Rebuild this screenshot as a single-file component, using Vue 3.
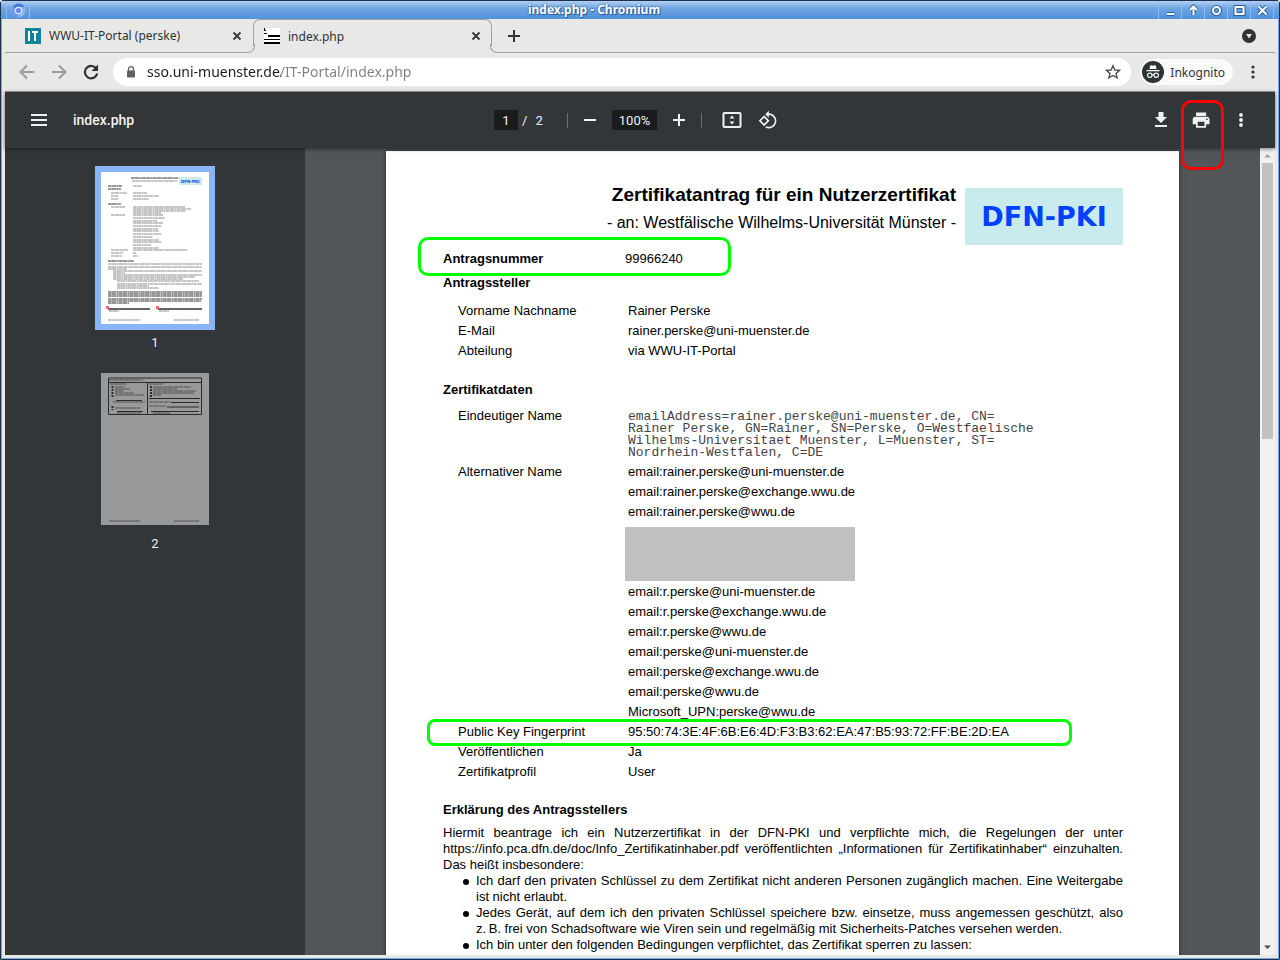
<template>
  <div class="window">
    <header class="titlebar">
      <span class="app-icon">
        <svg width="15" height="15" viewBox="0 0 15 15">
          <circle cx="7.5" cy="7.5" r="7" fill="#8db4f2"/>
          <path d="M7.500 7.500L1.500 4A7 7 0 0 1 13.600 4H7.500Z" fill="#4a78d8"/>
          <path d="M1.500 4A7 7 0 0 0 6.500 14.400L9.500 9Z" fill="#6e9af0"/>
          <circle cx="7.500" cy="7.500" r="3.200" fill="#6490ea" stroke="#dce9fd" stroke-width="1.200"/>
        </svg>
      </span>
      <span class="window-title">index.php - Chromium</span>
      <div class="window-buttons">
        <button v-for="b in windowButtons" :key="b.label" :aria-label="b.label">
          <svg width="13" height="13" viewBox="0 0 13 13" fill="none" stroke="#2d5f9f" stroke-width="4">
            <path :d="b.d"/>
            <path :d="b.d" stroke="#fff" stroke-width="2"/>
          </svg>
        </button>
      </div>
    </header>

    <div class="tabstrip">
      <div class="tab">
        <svg width="16" height="16" viewBox="0 0 16 16">
          <rect width="16" height="16" fill="#0f839c"/>
          <path d="M3 3H5V13H3ZM7 3H13V5H11V13H9V5H7Z" fill="#fff"/>
        </svg>
        <span class="tab-title">WWU-IT-Portal (perske)</span>
        <button class="icon-btn" aria-label="Tab schließen">
          <svg width="10" height="10" viewBox="0 0 10 10"><path d="M1.500 1.500L8.500 8.500M8.500 1.500L1.500 8.500" stroke="#333739" stroke-width="1.800"/></svg>
        </button>
      </div>
      <div class="tab active">
        <svg width="16" height="16" viewBox="0 0 16 16">
          <rect width="16" height="16" fill="#fff"/>
          <path d="M0 0H1V2H2V3H0ZM0 5H3V6H0ZM4 7H16V9H4ZM0 11H16V12H0ZM0 14H16V16H0Z" fill="#000"/>
        </svg>
        <span class="tab-title">index.php</span>
        <button class="icon-btn" aria-label="Tab schließen">
          <svg width="10" height="10" viewBox="0 0 10 10"><path d="M1.500 1.500L8.500 8.500M8.500 1.500L1.500 8.500" stroke="#333739" stroke-width="1.800"/></svg>
        </button>
      </div>
      <div class="strip-rest">
        <button class="icon-btn" aria-label="Neuer Tab">
          <svg width="12" height="12" viewBox="0 0 12 12"><path d="M6 0V12M0 6H12" stroke="#2e3436" stroke-width="2"/></svg>
        </button>
        <button class="icon-btn" aria-label="Tabs suchen">
          <svg width="14" height="14" viewBox="0 0 14 14">
            <circle cx="7" cy="7" r="7" fill="#2e3436"/>
            <path d="M4 5H10L7 9.500Z" fill="#e8e8e6"/>
          </svg>
        </button>
      </div>
    </div>

    <nav class="navbar">
      <button class="icon-btn nav-btn" aria-label="Zurück">
        <svg width="16" height="16" viewBox="0 0 16 16" fill="none" stroke="#9a9d9d" stroke-width="2"><path d="M15 8H2M8 1.500L1.500 8L8 14.500"/></svg>
      </button>
      <button class="icon-btn nav-btn" aria-label="Vorwärts">
        <svg width="16" height="16" viewBox="0 0 16 16" fill="none" stroke="#9a9d9d" stroke-width="2"><path d="M1 8H14M8 1.500L14.500 8L8 14.500"/></svg>
      </button>
      <button class="icon-btn nav-btn" aria-label="Neu laden">
        <svg width="16" height="16" viewBox="0 0 16 16" fill="none"><path d="M13.500 5A6.200 6.200 0 1 0 14.200 9.500" stroke="#2e3436" stroke-width="2.200"/><path d="M15 0.500V7H8.500Z" fill="#2e3436"/></svg>
      </button>
      <div class="omnibox">
        <svg width="10" height="12" viewBox="0 0 10 12"><rect x="1" y="4.500" width="8" height="7" rx="1" fill="#5f6368"/><path d="M2.500 5V3.200A2.500 2.500 0 0 1 7.500 3.200V5" fill="none" stroke="#5f6368" stroke-width="1.300"/></svg>
        <input v-model="url" class="url" aria-label="Adresse">
        <button class="icon-btn" aria-label="Lesezeichen">
          <svg width="16" height="16" viewBox="0 0 16 16"><path d="M8 1.800L9.900 6L14.500 6.400L11 9.400L12.100 13.900L8 11.500L3.900 13.900L5 9.400L1.500 6.400L6.100 6Z" fill="none" stroke="#4c5052" stroke-width="1.400"/></svg>
        </button>
      </div>
      <button class="profile">
        <svg width="22" height="22" viewBox="0 0 22 22">
          <circle cx="11" cy="11" r="11" fill="#2e3436"/>
          <path d="M7.500 8L8.300 4.500Q8.500 4 9.300 4.300Q11 5 12.700 4.300Q13.500 4 13.700 4.500L14.500 8ZM4.500 9H17.500V10.200H4.500Z" fill="#fff"/>
          <g fill="none" stroke="#fff" stroke-width="1.100"><circle cx="7.800" cy="14.200" r="2.200"/><circle cx="14.200" cy="14.200" r="2.200"/><path d="M10 14Q11 13.200 12 14"/></g>
        </svg>
        Inkognito
      </button>
      <button class="icon-btn browser-menu" aria-label="Menü">
        <svg width="4" height="14" viewBox="0 0 4 14" fill="#2e3436"><circle cx="2" cy="2" r="1.600"/><circle cx="2" cy="7" r="1.600"/><circle cx="2" cy="12" r="1.600"/></svg>
      </button>
    </nav>

    <div class="pdf">
      <div class="pdf-toolbar">
        <div class="pdf-start">
          <button class="pdf-btn" aria-label="Seitenleiste">
            <svg width="24" height="24" viewBox="0 0 24 24"><path d="M4 6H20V8H4ZM4 11H20V13H4ZM4 16H20V18H4Z"/></svg>
          </button>
          <span class="pdf-name">index.php</span>
        </div>
        <div class="pdf-center">
          <div class="pages">
            <input v-model="page" class="page-input" aria-label="Seite"><span>/</span><span>2</span>
          </div>
          <span class="sep"></span>
          <button class="pdf-btn" aria-label="Verkleinern"><svg width="24" height="24" viewBox="0 0 24 24"><path d="M6 11H18V13H6Z"/></svg></button>
          <input v-model="zoom" class="zoom-input" aria-label="Zoom">
          <button class="pdf-btn" aria-label="Vergrößern"><svg width="24" height="24" viewBox="0 0 24 24"><path d="M6 11H11V6H13V11H18V13H13V18H11V13H6Z"/></svg></button>
          <span class="sep"></span>
          <button class="pdf-btn fit" aria-label="An Seite anpassen">
            <svg width="24" height="24" viewBox="0 0 24 24"><rect x="3.500" y="5" width="17" height="14" rx="1" fill="none" stroke="#f1f1f1" stroke-width="2"/><path d="M12 7.500L14.500 10.500H9.500ZM12 16.500L9.500 13.500H14.500Z"/></svg>
          </button>
          <button class="pdf-btn rotate" aria-label="Drehen">
            <svg width="24" height="24" viewBox="0 0 24 24"><path d="M7.340 6.410L0.860 12.900L7.350 19.380L13.840 12.900ZM3.690 12.900L7.350 9.240L11 12.900L7.340 16.560ZM19.360 6.640C17.610 4.880 15.300 4 13 4V0.760L8.760 5L13 9.240V6C14.790 6 16.580 6.680 17.950 8.050A7 7 0 0 1 10.110 19.400L8.620 20.890A9 9 0 0 0 19.360 6.640Z"/></svg>
          </button>
        </div>
        <div class="pdf-end">
          <button class="pdf-btn" aria-label="Herunterladen"><svg width="24" height="24" viewBox="0 0 24 24"><path d="M18 9H14.500V4H9.500V9H6L12 15ZM6 17V19H18V17Z"/></svg></button>
          <button class="pdf-btn print" aria-label="Drucken"><svg width="24" height="24" viewBox="0 0 24 24"><path d="M19 8H5C3.340 8 2 9.340 2 11V17H6V21H18V17H22V11C22 9.340 20.660 8 19 8ZM16 19H8V14H16ZM19 12A1 1 0 1 1 19 10A1 1 0 0 1 19 12ZM18 3H6V7H18Z" transform="translate(2 2) scale(.84)"/></svg></button>
          <button class="pdf-btn" aria-label="Weitere Aktionen"><svg width="24" height="24" viewBox="0 0 24 24"><circle cx="12" cy="7" r="1.900"/><circle cx="12" cy="12" r="1.900"/><circle cx="12" cy="17" r="1.900"/></svg></button>
        </div>
      </div>

      <div class="pdf-body">
        <aside class="thumbs">
          <button class="thumb selected">
            <svg width="108" height="152" viewBox="0 0 108 152" class="thumb-page">
              <rect width="108" height="152" fill="#fff"/>
              <rect x="78" y="5" width="23" height="8" fill="#c9ebed"/>
              <text x="80" y="11" class="mini-logo">DFN-PKI</text>
              <path v-for="(l, i) in thumbLines" :key="i" :d="`M${l[0]} ${l[1]}H${l[2]}`" :class="['line', { bold: l[3] }]"/>
              <path d="M7 137H49M57 137H101" stroke="#333" stroke-width="1.500"/>
              <path d="M5 134H8V137H5ZM55 134H58V137H55Z" fill="#f66"/>
            </svg>
            <span>1</span>
          </button>
          <button class="thumb">
            <svg width="108" height="152" viewBox="0 0 108 152" class="thumb-page">
              <rect width="108" height="152" fill="#98999b"/>
              <g fill="none" stroke="#2a2b2d">
                <path d="M7.500 5H100.500V41.500H7.500ZM7.500 9.500H100.500M46.500 9.500V41.500"/>
                <path d="M15 27.500H41M48 25.500H99M70 29.500H98M66 34H98M16 38.500H42M50 38.500H98"/>
                <path d="M11.500 13V24M50 13V24M11.500 33V37" stroke-width="2" stroke-dasharray="2 1"/>
              </g>
              <path v-for="(l, i) in backLines" :key="i" :d="`M${l[0]} ${l[1]}H${l[2]}`" class="line back"/>
            </svg>
            <span>2</span>
          </button>
        </aside>

        <main class="viewer">
          <article class="sheet">
            <div class="doc-head">
              <div>
                <h1>Zertifikatantrag für ein Nutzerzertifikat</h1>
                <p class="subtitle">- an: Westfälische Wilhelms-Universität Münster -</p>
              </div>
              <div class="logo">DFN-PKI</div>
            </div>

            <div class="number marked">
              <strong>Antragsnummer</strong><span>99966240</span>
            </div>
            <h2 class="applicant">Antragssteller</h2>
            <dl>
              <div v-for="r in applicant" :key="r[0]" class="row"><dt>{{ r[0] }}</dt><dd>{{ r[1] }}</dd></div>
            </dl>

            <h2 class="cert">Zertifikatdaten</h2>
            <dl>
              <div class="row dn">
                <dt>Eindeutiger Name</dt>
                <dd><span v-for="l in dn" :key="l">{{ l }}</span></dd>
              </div>
              <div class="row">
                <dt>Alternativer Name</dt>
                <dd>
                  <div v-for="n in longNames" :key="n">{{ n }}</div>
                  <div class="redacted"></div>
                  <div v-for="n in shortNames" :key="n">{{ n }}</div>
                </dd>
              </div>
              <div class="row marked fingerprint">
                <dt>Public Key Fingerprint</dt>
                <dd>95:50:74:3E:4F:6B:E6:4D:F3:B3:62:EA:47:B5:93:72:FF:BE:2D:EA</dd>
              </div>
              <div class="row"><dt>Veröffentlichen</dt><dd>Ja</dd></div>
              <div class="row"><dt>Zertifikatprofil</dt><dd>User</dd></div>
            </dl>

            <h2 class="declaration">Erklärung des Antragsstellers</h2>
            <p class="lines">
              <span class="full">Hiermit beantrage ich ein Nutzerzertifikat in der DFN-PKI und verpflichte mich, die Regelungen der unter</span>
              <span class="full">https://info.pca.dfn.de/doc/Info_Zertifikatinhaber.pdf veröffentlichten „Informationen für Zertifikatinhaber“ einzuhalten.</span>
              <span>Das heißt insbesondere:</span>
            </p>
            <ul class="lines">
              <li>
                <span class="full">Ich darf den privaten Schlüssel zu dem Zertifikat nicht anderen Personen zugänglich machen. Eine Weitergabe</span>
                <span>ist nicht erlaubt.</span>
              </li>
              <li>
                <span class="full">Jedes Gerät, auf dem ich den privaten Schlüssel speichere bzw. einsetze, muss angemessen geschützt, also</span>
                <span>z.&#8239;B. frei von Schadsoftware wie Viren sein und regelmäßig mit Sicherheits-Patches versehen werden.</span>
              </li>
              <li><span>Ich bin unter den folgenden Bedingungen verpflichtet, das Zertifikat sperren zu lassen:</span></li>
            </ul>
          </article>
        </main>

        <div class="scrollbar">
          <svg width="15" height="15" viewBox="0 0 15 15"><path d="M4 9.500L7.500 6L11 9.500Z" fill="#a3a3a3"/></svg>
          <div class="scroll-thumb"></div>
          <svg width="15" height="15" viewBox="0 0 15 15"><path d="M4 5.500L7.500 9L11 5.500Z" fill="#505050"/></svg>
        </div>
      </div>
    </div>
  </div>
</template>

<script setup>
import { ref } from 'vue'

const url = ref('sso.uni-muenster.de/IT-Portal/index.php')
const page = ref('1')
const zoom = ref('100%')

const windowButtons = [
  { label: 'Minimieren', d: 'M3 10H10' },
  { label: 'Einrollen', d: 'M6.500 11V3M3 6L6.500 2.500L10 6' },
  { label: 'Anheften', d: 'M3 6.500A3.500 3.500 0 1 1 10 6.500A3.500 3.500 0 1 1 3 6.500Z' },
  { label: 'Maximieren', d: 'M2.500 3H10.500V10H2.500Z' },
  { label: 'Schließen', d: 'M2.500 2.500L10.500 10.500M10.500 2.500L2.500 10.500' }
]

const applicant = [
  ['Vorname Nachname', 'Rainer Perske'],
  ['E-Mail', 'rainer.perske@uni-muenster.de'],
  ['Abteilung', 'via WWU-IT-Portal']
]

const dn = [
  'emailAddress=rainer.perske@uni-muenster.de, CN=',
  'Rainer Perske, GN=Rainer, SN=Perske, O=Westfaelische',
  'Wilhelms-Universitaet Muenster, L=Muenster, ST=',
  'Nordrhein-Westfalen, C=DE'
]

const longNames = [
  'email:rainer.perske@uni-muenster.de',
  'email:rainer.perske@exchange.wwu.de',
  'email:rainer.perske@wwu.de'
]

const shortNames = [
  'email:r.perske@uni-muenster.de',
  'email:r.perske@exchange.wwu.de',
  'email:r.perske@wwu.de',
  'email:perske@uni-muenster.de',
  'email:perske@exchange.wwu.de',
  'email:perske@wwu.de',
  'Microsoft_UPN:perske@wwu.de'
]

// [x1, y, x2, bold]
const thumbLines = [
  [30, 6, 77, true], [31, 9, 76], [7, 14, 21, true], [32, 14, 41], [7, 17, 20, true],
  [10, 21, 26], [32, 21, 46], [10, 24, 17], [32, 24, 58], [10, 27, 17], [32, 27, 48],
  [7, 32, 20, true], [10, 35, 24], [32, 35, 84], [32, 37, 90], [32, 39, 85], [32, 41, 60],
  [10, 43, 24], [32, 43, 62], [32, 46, 64], [32, 49, 56], [32, 51, 62], [32, 54, 60],
  [32, 57, 57], [32, 59, 58], [32, 62, 60], [32, 65, 52], [32, 68, 58], [32, 70, 60],
  [32, 73, 50], [32, 76, 58], [10, 78, 27], [32, 78, 86], [10, 81, 22], [32, 81, 35],
  [10, 84, 21], [32, 84, 37], [7, 89, 33, true], [7, 92, 101], [7, 95, 101], [7, 97, 26],
  [12, 99, 101], [12, 101, 24], [12, 103, 101], [12, 105, 94], [12, 107, 82],
  [16, 109, 98], [16, 112, 101], [16, 114, 48], [16, 116, 58],
  [7, 120, 101, true], [7, 122, 101, true], [7, 124, 101, true], [7, 127, 101, true],
  [7, 129, 100, true], [7, 131, 28, true], [8, 139, 18], [58, 139, 68],
  [7, 148, 39], [73, 148, 98]
]

const backLines = [
  [8, 7, 42], [9, 11, 25], [14, 14, 24], [14, 16, 29], [14, 18, 23], [14, 20, 33], [14, 22, 43],
  [12, 29, 44], [14, 35, 40], [48, 11, 62], [52, 14, 90], [52, 16, 76], [52, 18, 95],
  [52, 20, 93], [52, 22, 60], [48, 29, 69], [48, 33, 65], [16, 40, 40], [52, 40, 69],
  [8, 148, 39], [73, 148, 98]
]
</script>

<style>
body {
  margin: 0;
  overflow: hidden;
}
</style>

<style scoped>
* {
  box-sizing: border-box;
}

button {
  border: none;
  padding: 0;
  background: none;
  font: inherit;
  color: inherit;
  cursor: pointer;
}

input {
  border: none;
  outline: none;
  padding: 0;
  min-width: 0;
  font: inherit;
  color: inherit;
}

svg {
  display: block;
  flex-shrink: 0;
}

h1, h2, p, dl, dd, ul {
  margin: 0;
  padding: 0;
}

.window {
  height: 100vh;
  display: flex;
  flex-direction: column;
  padding: 0 3px 4px;
  border: 1px solid #1c3050;
  border-radius: 3px 3px 0 0;
  background: #e8e8e6;
  box-shadow: inset 0 0 0 1px #74a9e6;
  font-family: "Noto Sans", sans-serif;
  font-size: 12px;
  color: #2e3436;
}

/* ====== title bar ====== */
.titlebar {
  height: 18px;
  flex-shrink: 0;
  margin: 0 -3px;
  display: flex;
  align-items: center;
  background: linear-gradient(#b4d0f2, #6ea5e2 40%, #5292da);
}

.app-icon {
  margin-left: 5px;
  width: 24px;
  height: 18px;
  display: flex;
  align-items: center;
  justify-content: center;
  border-left: 1px solid #8fb9ea;
  border-right: 1px solid #8fb9ea;
}

.window-title {
  flex: 1;
  text-align: center;
  font-weight: 700;
  line-height: 20px;
  color: #fff;
  text-shadow: 0 0 2px #1d4d8a, 1px 1px 1px #2d5f9f;
}

.window-buttons {
  display: flex;
  margin-right: 5px;
  border-right: 1px solid #8fb9ea;
}

.window-buttons button {
  width: 23px;
  height: 18px;
  display: flex;
  align-items: center;
  justify-content: center;
  border-left: 1px solid #8fb9ea;
}

/* ====== tabs ====== */
.tabstrip {
  height: 34px;
  flex-shrink: 0;
  display: flex;
  margin: 0 1px;
}

.icon-btn {
  display: flex;
  align-items: center;
  justify-content: center;
}

.tab {
  width: 241px;
  margin-right: 7px;
  padding: 0 4px 0 20px;
  display: flex;
  align-items: center;
  gap: 8px;
  border-bottom: 1px solid #a0a09e;
}

.tab-title {
  flex: 1;
}

.tab.active {
  position: relative;
  width: 239px;
  height: 27px;
  margin: 0;
  padding: 6px 10px 0;
  border: 1px solid #a0a09e;
  border-bottom: none;
  border-radius: 7px 7px 0 0;
}

.tab.active::before,
.tab.active::after {
  content: "";
  position: absolute;
  bottom: -7px;
  width: 8px;
  height: 8px;
  border-bottom: 1px solid #a0a09e;
}

.tab.active::before {
  left: -8px;
  border-right: 1px solid #a0a09e;
  border-bottom-right-radius: 7px;
}

.tab.active::after {
  right: -8px;
  border-left: 1px solid #a0a09e;
  border-bottom-left-radius: 7px;
}

.strip-rest {
  flex: 1;
  margin-left: 7px;
  padding: 0 19px 0 9px;
  display: flex;
  align-items: center;
  justify-content: space-between;
  border-bottom: 1px solid #a0a09e;
}

/* ====== address bar ====== */
.navbar {
  height: 39px;
  flex-shrink: 0;
  margin: 0 1px;
  padding: 0 20px 0 6px;
  display: flex;
  align-items: center;
  border-bottom: 1px solid #a0a09e;
}

.nav-btn {
  width: 32px;
  height: 32px;
}

.omnibox {
  flex: 1;
  height: 28px;
  margin-left: 6px;
  padding: 0 10px 0 13px;
  display: flex;
  align-items: center;
  gap: 11px;
  border-radius: 14px;
  background: #fff;
}

.url {
  flex: 1;
  font-size: 14px;
  line-height: 20px;
  color: transparent;
  /* host dark, path grey */
  background: linear-gradient(90deg, #1a1c1d 134px, #7b7f80 134px);
  background-clip: text;
}

.profile {
  height: 26px;
  margin-left: 9px;
  padding: 0 8px 0 2px;
  display: flex;
  align-items: center;
  gap: 6px;
  border-radius: 13px;
  background: #fafafa;
}

.browser-menu {
  margin-left: 18px;
}

/* ====== pdf viewer ====== */
.pdf {
  flex: 1;
  min-height: 0;
  margin: 0 1px;
  display: flex;
  flex-direction: column;
  background: #525659;
  color: #f1f1f1;
}

.pdf-toolbar {
  position: relative;
  z-index: 1;
  height: 56px;
  flex-shrink: 0;
  display: flex;
  align-items: center;
  background: #323639;
  box-shadow: 0 1px 4px rgba(0, 0, 0, 0.5);
  font-family: Roboto, sans-serif;
  font-size: 14px;
}

.pdf-start,
.pdf-end {
  flex: 1;
  display: flex;
  align-items: center;
}

.pdf-start {
  padding-left: 22px;
  gap: 22px;
}

.pdf-end {
  justify-content: flex-end;
  padding-right: 22px;
  gap: 16px;
}

.pdf-name {
  font-weight: 500;
}

.pdf-center {
  display: flex;
  align-items: center;
  gap: 10px;
  padding-right: 6px;
}

.pages {
  width: 63px;
  display: flex;
  align-items: center;
  gap: 8px;
  font-size: 13px;
}

.pages input {
  margin-right: -4px;
}

.page-input,
.zoom-input {
  height: 20px;
  background: #191b1c;
  text-align: center;
}

.page-input {
  width: 24px;
}

.zoom-input {
  width: 45px;
  font-size: 13px;
}

.sep {
  width: 1px;
  height: 15px;
  background: #6b6e70;
}

.pdf-btn {
  position: relative;
  width: 24px;
  height: 24px;
}

.pdf-btn svg {
  fill: #f1f1f1;
}

.fit {
  margin-left: 8px;
}

.rotate {
  margin-left: 2px;
}

.rotate svg {
  width: 20px;
  height: 20px;
  margin: 0 auto;
}

/* hand-drawn marker around the print button */
.print::after {
  content: "";
  position: absolute;
  inset: -8px -11px -38px -8px;
  border: 3px solid #f00;
  border-radius: 10px;
}

.pdf-body {
  flex: 1;
  min-height: 0;
  display: flex;
}

.thumbs {
  width: 300px;
  flex-shrink: 0;
  padding-top: 18px;
  display: flex;
  flex-direction: column;
  align-items: center;
  gap: 14px;
  background: #323639;
  font-family: Roboto, sans-serif;
  font-size: 13px;
}

.thumb {
  display: flex;
  flex-direction: column;
  align-items: center;
  gap: 3px;
  line-height: 20px;
}

.thumb-page {
  box-sizing: content-box;
  border: 6px solid transparent;
}

.selected .thumb-page {
  border-color: #8ab4f8;
}

.line {
  stroke: #8c8c8c;
  stroke-width: 1;
  stroke-dasharray: 3 0.300 5 0.400 2 0.300;
}

.line.bold {
  stroke: #333;
}

.line.back {
  stroke: #505153;
}

.mini-logo {
  font: 700 4px "DejaVu Sans", sans-serif;
  fill: #0a46ff;
}

.viewer {
  flex: 1;
  min-width: 0;
  overflow: hidden;
  display: flex;
  justify-content: center;
  align-items: flex-start;
  padding-top: 3px;
}

.sheet {
  width: 793px;
  flex-shrink: 0;
  min-height: 1122px;
  padding: 37px 56px 37px 57px;
  background: #fff;
  box-shadow: 0 0 5px rgba(0, 0, 0, 0.5);
  color: #000;
  font-family: "Liberation Sans", Arial, sans-serif;
  font-size: 13px;
  line-height: 20px;
}

.doc-head {
  display: flex;
  justify-content: flex-end;
  gap: 9px;
  text-align: right;
}

h1 {
  margin-top: -5px;
  font-size: 19px;
  line-height: 24px;
}

.subtitle {
  margin-top: 4px;
  font-size: 16px;
  line-height: 24px;
}

.logo {
  width: 158px;
  height: 57px;
  display: flex;
  align-items: center;
  justify-content: center;
  background: #c9ebed;
  color: #0040ff;
  font-family: "DejaVu Sans", sans-serif;
  font-size: 27px;
  font-weight: 700;
}

h2 {
  font-size: 13px;
  line-height: 20px;
}

.number {
  margin-top: 4px;
  display: flex;
}

.number strong {
  width: 182px;
}

.marked {
  position: relative;
}

.marked::after {
  content: "";
  position: absolute;
  inset: -12px 392px -7px -25px;
  border: 3px solid #0f0;
  border-radius: 10px;
}

.applicant {
  margin: 4px 0 8px;
}

.cert {
  margin: 19px 0 6px;
}

.declaration {
  margin: 18px 0 5px;
}

.row {
  display: grid;
  grid-template-columns: 170px 1fr;
  padding-left: 15px;
}

.dn dd {
  padding: 5px 0 3px;
  font-family: "Liberation Mono", monospace;
  line-height: 12px;
  color: #444;
}

.dn span {
  display: block;
}

.redacted {
  width: 230px;
  height: 54px;
  margin: 5px 0 1px -3px;
  background: #c0c0c0;
}

.fingerprint::after {
  inset: -3px 51px -4px -16px;
  border-radius: 8px;
}

.lines {
  line-height: 16px;
}

.lines span {
  display: block;
  white-space: nowrap;
}

.lines .full {
  text-align-last: justify;
}

ul.lines {
  padding-left: 20px;
  list-style: none;
}

.lines li {
  display: grid;
  grid-template-columns: 13px 1fr;
}

.lines li::before {
  content: "";
  grid-row: 1 / span 2;
  width: 6px;
  height: 6px;
  margin-top: 6px;
  border-radius: 50%;
  background: #000;
}

.lines li span {
  grid-column: 2;
}

/* ====== scrollbar ====== */
.scrollbar {
  width: 15px;
  flex-shrink: 0;
  display: flex;
  flex-direction: column;
  background: #f1f1f1;
}

.scroll-thumb {
  height: 276px;
  margin: 0 2px auto;
  background: #c1c1c1;
}
</style>
